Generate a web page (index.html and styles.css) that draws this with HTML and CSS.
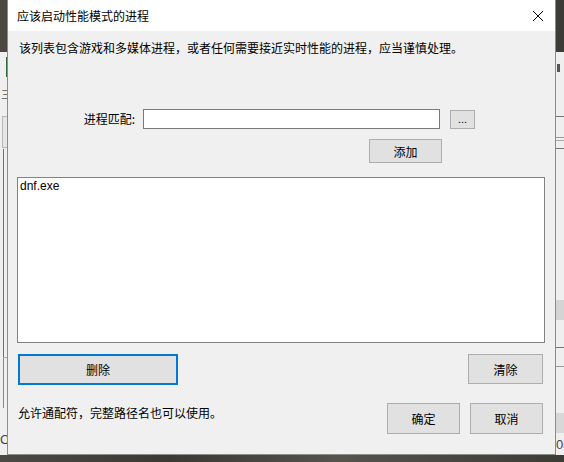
FILE: index.html
```html
<!DOCTYPE html>
<html lang="zh-CN">
<head>
<meta charset="utf-8">
<title>应该启动性能模式的进程</title>
<link rel="stylesheet" href="styles.css">
</head>
<body>
<div class="desktop">
  <div class="backwin">
    <div class="bw-green"></div>
    <div class="bw-glyph">三</div>
    <div class="bw-box1"></div>
    <div class="bw-vline"></div>
    <div class="bw-box2"></div>
    <div class="bw-c">C</div>
    <div class="bw-r1"></div>
    <div class="bw-r2"></div>
    <div class="bw-r3"></div>
    <div class="bw-r4"></div>
    <div class="bw-band1"></div>
    <div class="bw-r5"></div>
    <div class="bw-r6"></div>
    <div class="bw-band2"></div>
    <div class="bw-08">08</div>
    <div class="bw-knob"></div>
  </div>

  <div class="dialog">
    <div class="titlebar">
      <span class="title">应该启动性能模式的进程</span>
      <svg class="close" width="12" height="12" viewBox="0 0 12 12"><path d="M1 1 L11 11 M11 1 L1 11" stroke="#000" stroke-width="1" fill="none"/></svg>
    </div>
    <div class="body">
      <p class="desc">该列表包含游戏和多媒体进程，或者任何需要接近实时性能的进程，应当谨慎处理。</p>
      <div class="match-row">
        <label class="match-label">进程匹配:</label>
        <div class="input"></div>
        <div class="btn btn-dots">...</div>
      </div>
      <div class="add-row">
        <div class="btn btn-add">添加</div>
      </div>
      <div class="list">
        <div class="list-item">dnf.exe</div>
      </div>
      <div class="action-row">
        <div class="btn btn-del">删除</div>
        <div class="btn btn-clear">清除</div>
      </div>
      <div class="footer">
        <p class="hint">允许通配符，完整路径名也可以使用。</p>
        <div class="btn btn-ok">确定</div>
        <div class="btn btn-cancel">取消</div>
      </div>
    </div>
  </div>
</div>
</body>
</html>
```

FILE: styles.css
```css
html, body {
  margin: 0;
  padding: 0;
}
body {
  width: 564px;
  height: 462px;
  overflow: hidden;
  font-family: "Noto Sans CJK SC", "Noto Sans", sans-serif;
  font-size: 12px;
  color: #000;
}
.desktop {
  position: relative;
  width: 564px;
  height: 462px;
  background: linear-gradient(90deg, #4a4a42 0%, #3a3933 30%, #55534a 60%, #3c3b35 100%);
  overflow: hidden;
}
.backwin {
  position: absolute;
  left: 0;
  top: 52px;
  width: 564px;
  height: 403px;
  background: #efefef;
}
.backwin > div {
  position: absolute;
}
.bw-green { left: 6px; top: 5px; width: 2px; height: 20px; background: #2f6a3c; }
.bw-glyph { left: 1px; top: 36px; font-size: 11px; color: #555; line-height: 12px; }
.bw-box1 { left: 2px; top: 64px; width: 6px; height: 30px; border: 1px solid #b8b8b8; border-right: none; background: #e6e6e6; }
.bw-vline { left: 3px; top: 97px; width: 1px; height: 250px; background: #707070; }
.bw-box2 { left: 3px; top: 305px; width: 5px; height: 50px; border-left: 1px solid #888; border-top: 1px solid #aaa; }
.bw-c { left: 0; top: 381px; font-family: "Liberation Sans", sans-serif; font-size: 13px; color: #444; line-height: 14px; }
.bw-r1 { left: 556px; top: 64px; width: 8px; height: 1px; background: #777; }
.bw-r2 { left: 556px; top: 85px; width: 8px; height: 1px; background: #999; }
.bw-r3 { left: 556px; top: 88px; width: 8px; height: 1px; background: #aaa; }
.bw-r4 { left: 556px; top: 96px; width: 8px; height: 1px; background: #777; }
.bw-band1 { left: 556px; top: 248px; width: 8px; height: 20px; background: #d4d4d4; }
.bw-r5 { left: 556px; top: 295px; width: 8px; height: 1px; background: #777; }
.bw-r6 { left: 556px; top: 314px; width: 8px; height: 1px; background: #999; }
.bw-band2 { left: 556px; top: 361px; width: 8px; height: 20px; background: #d8d8d8; }
.bw-08 { left: 556px; top: 386px; font-family: "Liberation Sans", sans-serif; font-size: 13px; color: #444; line-height: 14px; }
.bw-knob { left: 557px; top: 12px; width: 3px; height: 8px; background: #555; }

.dialog {
  position: absolute;
  left: 7px;
  top: 0;
  width: 547px;
  height: 454px;
  border: 1px solid #8c8c8c;
  border-top: none;
  background: #f0f0f0;
  display: flex;
  flex-direction: column;
}
.titlebar {
  height: 31px;
  background: #ffffff;
  display: flex;
  align-items: center;
  padding-left: 9px;
  padding-right: 11px;
  box-sizing: border-box;
}
.title {
  flex: 1;
  font-size: 12px;
  line-height: 16px;
  margin-top: 1px;
}
.close {
  display: block;
  margin-top: 1px;
}
.body {
  flex: 1;
  display: flex;
  flex-direction: column;
}
.desc {
  margin: 9px 0 0 11px;
  line-height: 16px;
  height: 16px;
}
.match-row {
  display: flex;
  align-items: flex-start;
  margin-top: 53px;
}
.match-label {
  width: 127px;
  text-align: right;
  line-height: 20px;
  padding-right: 0;
}
.input {
  margin-left: 8px;
  width: 295px;
  height: 18px;
  border: 1px solid #7a7a7a;
  background: #fff;
}
.btn {
  box-sizing: border-box;
  background: #e1e1e1;
  border: 1px solid #adadad;
  display: flex;
  align-items: center;
  justify-content: center;
  font-size: 12px;
}
.btn-dots {
  margin-left: 10px;
  margin-top: 1px;
  width: 25px;
  height: 19px;
  font-family: "Liberation Sans", sans-serif;
  font-size: 11px;
  padding-bottom: 2px;
}
.add-row {
  display: flex;
  margin-top: 10px;
}
.btn-add {
  margin-left: 361px;
  width: 73px;
  height: 24px;
}
.list {
  margin: 14px 0 0 9px;
  width: 528px;
  height: 166px;
  box-sizing: border-box;
  border: 1px solid #828282;
  background: #fff;
  padding: 2px 2px;
}
.list-item {
  font-family: "Liberation Sans", sans-serif;
  font-size: 12px;
  line-height: 13px;
}
.action-row {
  display: flex;
  margin-top: 11px;
}
.btn-del {
  margin-left: 10px;
  width: 160px;
  height: 31px;
  border: 2px solid #0078d7;
}
.btn-clear {
  margin-left: 290px;
  width: 75px;
  height: 30px;
}
.footer {
  display: flex;
  align-items: flex-start;
  margin-top: 18px;
}
.hint {
  margin: 2px 0 0 10px;
  width: 369px;
  line-height: 16px;
}
.btn-ok {
  width: 73px;
  height: 31px;
}
.btn-cancel {
  margin-left: 10px;
  width: 73px;
  height: 31px;
}
```
